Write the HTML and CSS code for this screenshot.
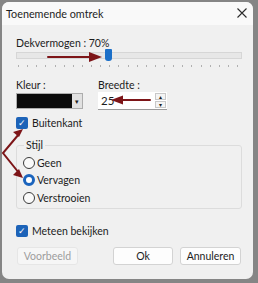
FILE: index.html
```html
<!DOCTYPE html>
<html lang="nl">
<head>
  <meta charset="UTF-8">
  <title>Toenemende omtrek</title>
  <link rel="stylesheet" href="styles.css">
</head>
<body>
  <!-- Dialog -->
  <div class="dialog">
    <div class="titlebar">
      <span class="title">Toenemende omtrek</span>
      <svg class="close" width="10" height="10" viewBox="0 0 10 10">
        <path d="M0.5 0.5 L9.5 9.5 M9.5 0.5 L0.5 9.5" stroke="#2b2b2b" stroke-width="1.1" fill="none"/>
      </svg>
    </div>

    <div class="content">
      <div class="label">Dekvermogen : 70%</div>
      <div class="slider">
        <div class="track"></div>
        <div class="thumb"></div>
      </div>
      <div class="ticks">
        <span></span><span></span><span></span><span></span><span></span>
        <span></span><span></span><span></span><span></span><span></span>
        <span></span><span></span><span></span><span></span><span></span>
        <span></span><span></span><span></span><span></span><span></span>
        <span></span><span></span><span></span><span></span><span></span>
      </div>

      <div class="row">
        <div class="field colour-field">
          <div class="label">Kleur :</div>
          <div class="colour-box">
            <div class="swatch"></div>
            <div class="drop">&#9662;</div>
          </div>
        </div>
        <div class="field">
          <div class="label">Breedte :</div>
          <div class="spinner">
            <span class="value">25</span>
            <div class="spin">
              <span>&#9652;</span>
              <span>&#9662;</span>
            </div>
          </div>
        </div>
      </div>

      <label class="check outer-check"><span class="box">&#10003;</span>Buitenkant</label>

      <fieldset class="group">
        <legend>Stijl</legend>
        <label class="radio"><span class="dot"></span>Geen</label>
        <label class="radio"><span class="dot on"></span>Vervagen</label>
        <label class="radio"><span class="dot"></span>Verstrooien</label>
      </fieldset>

      <label class="check live-check"><span class="box">&#10003;</span>Meteen bekijken</label>

      <div class="buttons">
        <button class="btn disabled">Voorbeeld</button>
        <div class="right-buttons">
          <button class="btn">Ok</button>
          <button class="btn wide">Annuleren</button>
        </div>
      </div>
    </div>
  </div>

  <!-- Red annotation arrows -->
  <svg class="arrows" width="258" height="283" viewBox="0 0 258 283">
    <g stroke="#7d1518" stroke-width="2" fill="none" stroke-linecap="round">
      <line x1="48" y1="57" x2="92" y2="57"/>
      <line x1="120" y1="100" x2="150" y2="100"/>
      <polyline points="19,134 3,153 19,173"/>
    </g>
    <g fill="#7d1518">
      <polygon points="102,57 89,52 89,62"/>
      <polygon points="111,100 123,95.5 123,104.5"/>
      <polygon points="23,129 13,132 19,137"/>
      <polygon points="23,178 13,175 19,169"/>
    </g>
  </svg>
</body>
</html>
```

FILE: styles.css
```css
* {
    margin: 0;
    padding: 0;
    box-sizing: border-box;
}

body {
    width: 258px;
    height: 283px;
    background-color: #858585;
    font-family: Lato, "Noto Sans", sans-serif;
    font-size: 10.5px;
    color: #1c1c1c;
    padding: 2px 5px 4px 2px;
    position: relative;
    overflow: hidden;
}

/* Dialog frame */
.dialog {
    width: 251px;
    height: 277px;
    background-color: #f0f0f0;
    border-radius: 7px;
    overflow: hidden;
}

.titlebar {
    height: 23px;
    background-color: #f9f9f9;
    display: flex;
    align-items: center;
    justify-content: space-between;
    padding: 0 6px 1px 4px;
}

.title {
    font-size: 10.8px;
}

.content {
    padding: 11px 11px 0 14px;
}

.label {
    line-height: 14px;
}

/* Slider */
.slider {
    position: relative;
    height: 13px;
    margin-top: -1px;
}

.track {
    position: absolute;
    top: 3px;
    left: 0;
    right: 0;
    height: 7px;
    background-color: #e7e7e7;
    border: 1px solid #d6d6d6;
}

.thumb {
    position: absolute;
    left: 89px;
    top: 0;
    width: 7px;
    height: 12px;
    background-color: #1b6fc8;
    border-radius: 1px 1px 3px 3px;
}

.ticks {
    display: flex;
    justify-content: space-between;
    padding: 0 4px 0 2px;
    margin-top: 3px;
    height: 3px;
}

.ticks span {
    width: 1px;
    height: 2px;
    background-color: #b0b0b0;
}

/* Colour and width */
.row {
    display: flex;
    margin-top: 10px;
}

.colour-field {
    width: 82px;
}

.colour-box {
    display: flex;
    width: 67px;
    height: 16px;
    margin-top: 1px;
    border: 1px solid #adadad;
    background-color: #e1e1e1;
}

.swatch {
    flex: 1;
    background-color: #0b0b0b;
}

.drop {
    width: 10px;
    font-size: 7px;
    line-height: 14px;
    text-align: center;
    color: #222;
}

.spinner {
    display: flex;
    justify-content: space-between;
    width: 69px;
    height: 18px;
    background-color: #fff;
    border-bottom: 1px solid #9a9a9a;
    padding-left: 3px;
}

.value {
    font-size: 11.5px;
    line-height: 18px;
}

.spin {
    display: flex;
    flex-direction: column;
    gap: 1px;
    padding: 1px 1px 0 0;
}

.spin span {
    width: 11px;
    height: 7px;
    font-size: 6px;
    line-height: 6px;
    text-align: center;
    border: 1px solid #c8c8c8;
    background-color: #f4f4f4;
}

/* Checkboxes */
.check {
    display: flex;
    align-items: center;
    gap: 4px;
    line-height: 14px;
}

.outer-check {
    margin-top: 6px;
}

.live-check {
    margin-top: 15px;
}

.box {
    width: 12px;
    height: 12px;
    border-radius: 2px;
    background-color: #1d63b8;
    color: #fff;
    font-size: 9px;
    line-height: 12px;
    text-align: center;
}

/* Style group */
.group {
    margin-top: 8px;
    border: 1px solid #dcdcdc;
    border-radius: 3px;
    padding: 2px 6px 0 6px;
    height: 71px;
}

.group legend {
    padding: 0 2px;
    margin-left: 1px;
    line-height: 14px;
}

.radio {
    display: flex;
    align-items: center;
    gap: 2px;
    height: 17.5px;
}

.dot {
    width: 12px;
    height: 12px;
    border: 1px solid #3a3a3a;
    border-radius: 50%;
    background-color: #fafafa;
}

.dot.on {
    border: 3.5px solid #1b64bd;
    background-color: #fff;
}

/* Buttons */
.buttons {
    display: flex;
    justify-content: space-between;
    margin-top: 9px;
    padding-right: 1px;
}

.right-buttons {
    display: flex;
    gap: 7px;
}

.btn {
    width: 60px;
    height: 18px;
    font-family: inherit;
    font-size: 10.5px;
    color: #1c1c1c;
    background-color: #fdfdfd;
    border: 1px solid #d3d3d3;
    border-radius: 3px;
}

.btn.wide {
    width: 61px;
}

.btn.disabled {
    width: 61px;
    color: #9d9d9d;
    background-color: #f6f6f6;
    border-color: #e6e6e6;
    margin-left: 1px;
}

.arrows {
    position: absolute;
    top: 0;
    left: 0;
    pointer-events: none;
}
```
